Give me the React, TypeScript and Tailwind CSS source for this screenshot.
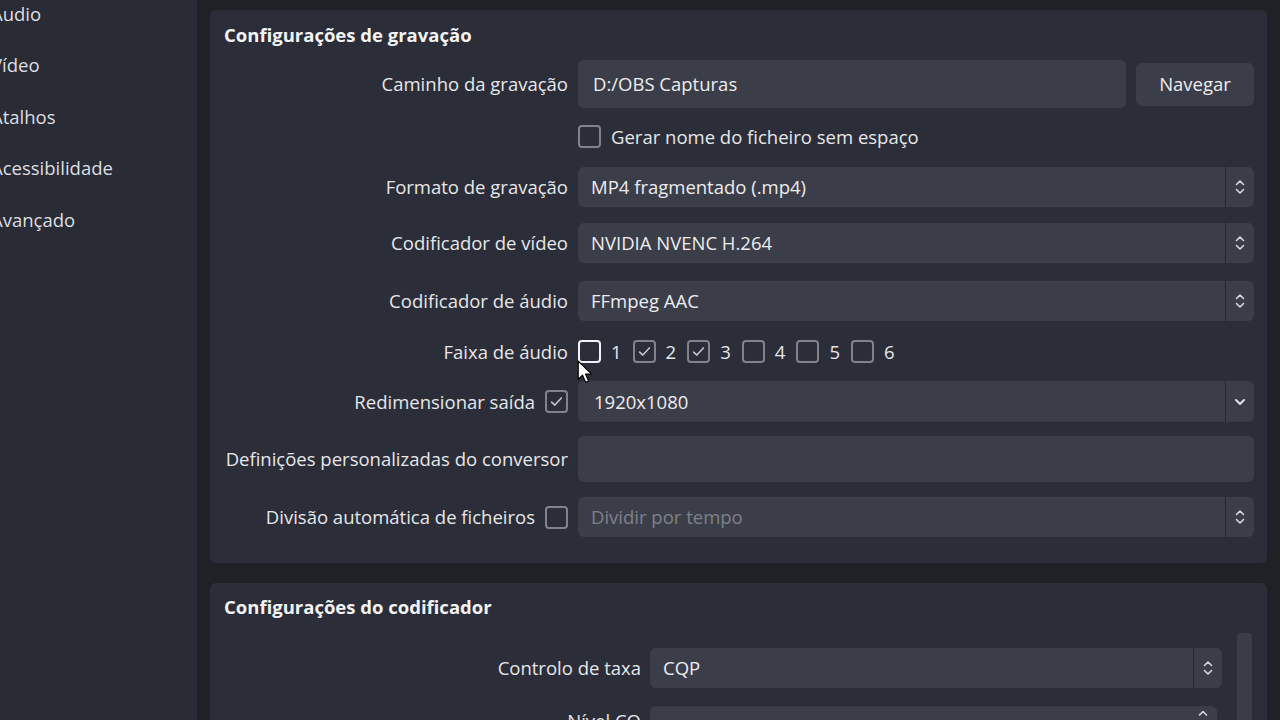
import React from "react";

function Check({ checked = false, hover = false }: { checked?: boolean; hover?: boolean }) {
  return (
    <div
      className={
        hover
          ? "w-[23px] h-[23px] shrink-0 rounded-[4px] border-2 border-[#f2f2f4] flex items-center justify-center"
          : "w-[23px] h-[23px] shrink-0 rounded-[4px] border-2 border-[#80838c] flex items-center justify-center"
      }
    >
      {checked && (
        <svg width="15" height="15" viewBox="0 0 16 16">
          <path d="M2.8 8.6l3.4 3.2L13.2 4.2" stroke="#c4c5cc" strokeWidth="1.7" fill="none" strokeLinecap="round" strokeLinejoin="round" />
        </svg>
      )}
    </div>
  );
}

function UpDown() {
  return (
    <svg width="12" height="18" viewBox="0 0 12 18">
      <path d="M2.5 6.5L6 3l3.5 3.5" stroke="#d6d7dc" strokeWidth="1.6" fill="none" strokeLinecap="round" strokeLinejoin="round" />
      <path d="M2.5 11.5L6 15l3.5-3.5" stroke="#d6d7dc" strokeWidth="1.6" fill="none" strokeLinecap="round" strokeLinejoin="round" />
    </svg>
  );
}

function Down() {
  return (
    <svg width="12" height="10" viewBox="0 0 12 10">
      <path d="M2 3l4 4 4-4" stroke="#e0e1e5" strokeWidth="2" fill="none" strokeLinecap="round" strokeLinejoin="round" />
    </svg>
  );
}

function Select({ value, placeholder = false, single = false }: { value: string; placeholder?: boolean; single?: boolean }) {
  return (
    <div className="flex h-full w-full rounded-[6px] bg-[#3b3e48] overflow-hidden">
      <div
        className={
          placeholder
            ? "flex-1 flex items-center pl-[13px] text-[#7e818a]"
            : single
            ? "flex-1 flex items-center pl-[16px] text-[#ececf0]"
            : "flex-1 flex items-center pl-[13px] text-[#ececf0]"
        }
      >
        {value}
      </div>
      <div className="w-[1px] bg-[#262830]" />
      <div className="w-[28px] flex items-center justify-center">{single ? <Down /> : <UpDown />}</div>
    </div>
  );
}

function Row({
  label,
  mt,
  h,
  children,
  extra,
}: {
  label: string;
  mt: string;
  h: string;
  children?: React.ReactNode;
  extra?: React.ReactNode;
}) {
  return (
    <div className={`flex items-center ${mt} ${h}`}>
      <div className="w-[345px] shrink-0 flex items-center justify-end gap-[10px] text-[#e6e6ea] whitespace-nowrap">
        <span>{label}</span>
        {extra}
      </div>
      <div className="ml-[10px] flex-1 h-full flex items-center">{children}</div>
    </div>
  );
}

export default function App() {
  const sideItems = ["Áudio", "Vídeo", "Atalhos", "Acessibilidade", "Avançado"];
  return (
    <div className="w-[1280px] h-[720px] overflow-hidden flex bg-[#1f2127] font-['Open_Sans',sans-serif] text-[18.5px] relative">
      {/* Sidebar */}
      <div className="w-[197px] shrink-0 bg-[#292c35] flex flex-col -mt-[12px]">
        {sideItems.map((s) => (
          <div key={s} className="h-[51.5px] flex items-center -ml-[9px] text-[#dedee3] whitespace-nowrap">
            {s}
          </div>
        ))}
      </div>

      {/* Main */}
      <div className="flex-1 pl-[13px] pr-[13px] pt-[10px] flex flex-col gap-[20px] min-w-0">
        {/* Panel 1 */}
        <div className="h-[553px] shrink-0 rounded-[6px] bg-[#2b2e38] pl-[13px] pr-[13px] flex flex-col">
          <div className="h-[50px] flex items-center pl-[1px] font-bold text-[#f4f4f6]">Configurações de gravação</div>

          <Row label="Caminho da gravação" mt="mt-0" h="h-[48px]">
            <div className="flex w-full h-full items-center gap-[10px]">
              <div className="flex-1 h-full rounded-[6px] bg-[#3b3e48] flex items-center pl-[15px] text-[#ececf0]">D:/OBS Capturas</div>
              <div className="w-[118px] h-[43px] rounded-[6px] bg-[#3b3e48] flex items-center justify-center text-[#ececf0]">Navegar</div>
            </div>
          </Row>

          <Row label="" mt="mt-[17px]" h="h-[23px]">
            <div className="flex items-center gap-[10px] text-[#e6e6ea]">
              <Check />
              <span>Gerar nome do ficheiro sem espaço</span>
            </div>
          </Row>

          <Row label="Formato de gravação" mt="mt-[19px]" h="h-[40px]">
            <Select value="MP4 fragmentado (.mp4)" />
          </Row>

          <Row label="Codificador de vídeo" mt="mt-[16px]" h="h-[40px]">
            <Select value="NVIDIA NVENC H.264" />
          </Row>

          <Row label="Codificador de áudio" mt="mt-[18px]" h="h-[40px]">
            <Select value="FFmpeg AAC" />
          </Row>

          <Row label="Faixa de áudio" mt="mt-[19px]" h="h-[23px]">
            <div className="flex items-center text-[#e6e6ea]">
              {[1, 2, 3, 4, 5, 6].map((n) => (
                <div key={n} className="w-[54.6px] flex items-center gap-[10px]">
                  <Check checked={n === 2 || n === 3} hover={n === 1} />
                  <span>{n}</span>
                </div>
              ))}
            </div>
          </Row>

          <Row label="Redimensionar saída" mt="mt-[18px]" h="h-[41px]" extra={<Check checked />}>
            <Select value="1920x1080" single />
          </Row>

          <Row label="Definições personalizadas do conversor" mt="mt-[14px]" h="h-[46px]">
            <div className="w-full h-full rounded-[6px] bg-[#3b3e48]" />
          </Row>

          <Row label="Divisão automática de ficheiros" mt="mt-[15px]" h="h-[40px]" extra={<Check />}>
            <Select value="Dividir por tempo" placeholder />
          </Row>
        </div>

        {/* Panel 2 */}
        <div className="flex-1 shrink-0 rounded-t-[6px] bg-[#2b2e38] pl-[13px] pr-[15px] flex flex-col">
          <div className="h-[48px] shrink-0 flex items-center pl-[1px] font-bold text-[#f4f4f6]">Configurações do codificador</div>
          <div className="flex gap-[15px] flex-1">
            <div className="flex-1 flex flex-col pt-[17px]">
              <div className="flex items-center h-[40px]">
                <div className="w-[418px] shrink-0 text-right text-[#e6e6ea]">Controlo de taxa</div>
                <div className="ml-[9px] flex-1 h-full">
                  <Select value="CQP" />
                </div>
              </div>
              <div className="flex items-start h-[40px] mt-[18px]">
                <div className="w-[418px] shrink-0 text-right text-[#e6e6ea] pt-[1px]">Nível CQ</div>
                <div className="ml-[9px] w-[567px] h-full rounded-[6px] bg-[#3b3e48] flex">
                  <div className="flex-1 flex items-center pl-[13px] text-[#ececf0]">20</div>
                  <div className="w-[28px] flex justify-center pt-[3px]">
                    <svg width="12" height="8" viewBox="0 0 12 8">
                      <path d="M2.5 6L6 2.5 9.5 6" stroke="#d6d7dc" strokeWidth="1.6" fill="none" strokeLinecap="round" strokeLinejoin="round" />
                    </svg>
                  </div>
                </div>
              </div>
            </div>
            <div className="w-[15px] shrink-0 mt-[2px] h-[200px] rounded-[4px] bg-[#3a3d47]" />
          </div>
        </div>
      </div>

      {/* Mouse cursor */}
      <svg className="absolute left-[577px] top-[360px]" width="17" height="25" viewBox="0 0 16 24">
        <path d="M1 1 L1 18.5 L5.2 14.6 L8.2 21.5 L11 20.3 L8 13.5 L13.8 13.5 Z" fill="#ffffff" stroke="#000000" strokeWidth="1.1" strokeLinejoin="round" />
      </svg>
    </div>
  );
}
